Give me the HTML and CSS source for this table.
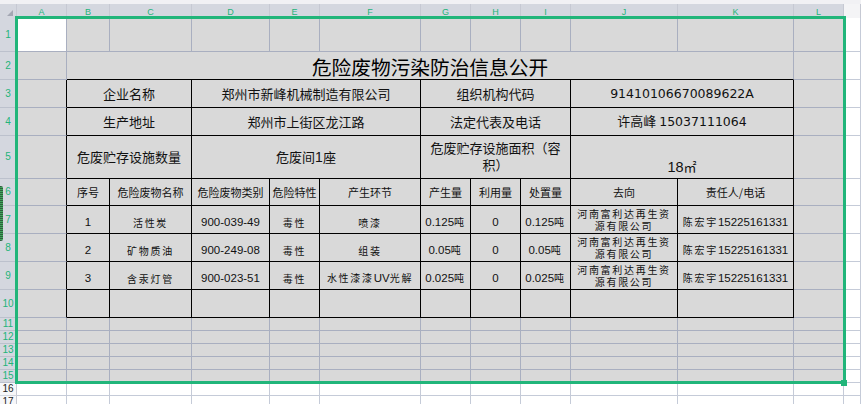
FILE: index.html
```html
<!DOCTYPE html>
<html lang="zh">
<head>
<meta charset="utf-8">
<title>危险废物污染防治信息公开</title>
<link rel="stylesheet" href="styles.css">
</head>
<body>
<div class="sheet">
  <div class="g">
    <div class="strip"></div>

    <div class="h corner"><span class="tri"></span></div>
    <div class="h">A</div><div class="h">B</div><div class="h">C</div><div class="h">D</div><div class="h">E</div><div class="h">F</div><div class="h">G</div><div class="h">H</div><div class="h">I</div><div class="h">J</div><div class="h">K</div><div class="h">L</div><div class="h ho"></div>

    <div class="rh">1</div>
    <div class="w"></div><div></div><div></div><div></div><div></div><div></div><div></div><div></div><div></div><div></div><div></div><div></div><div class="o"></div>

    <div class="rh">2</div>
    <div></div>
    <div class="title kb s10">危险废物污染防治信息公开</div>
    <div></div><div class="o"></div>

    <div class="rh">3</div>
    <div class="kr"></div>
    <div class="t s2 m">企业名称</div>
    <div class="t s3 m">郑州市新峰机械制造有限公司</div>
    <div class="t s3 m">组织机构代码</div>
    <div class="t s2 m"><span class="n">91410106670089622A</span></div>
    <div></div><div class="o"></div>

    <div class="rh">4</div>
    <div class="kr"></div>
    <div class="t s2 m">生产地址</div>
    <div class="t s3 m">郑州市上街区龙江路</div>
    <div class="t s3 m">法定代表及电话</div>
    <div class="t s2 m"><span>许高峰 <span class="n">15037111064</span></span></div>
    <div></div><div class="o"></div>

    <div class="rh">5</div>
    <div class="kr"></div>
    <div class="t s2 m">危废贮存设施数量</div>
    <div class="t s3 m"><span>危废间<span class="n1">1</span>座</span></div>
    <div class="t s3 m wrap">危废贮存设施面积（容积）</div>
    <div class="t s2 m bot"><span><span class="n18">18</span>㎡</span></div>
    <div></div><div class="o"></div>

    <div class="rh">6</div>
    <div class="kr"></div>
    <div class="t hd">序号</div>
    <div class="t hd">危险废物名称</div>
    <div class="t hd">危险废物类别</div>
    <div class="t hd">危险特性</div>
    <div class="t hd">产生环节</div>
    <div class="t hd">产生量</div>
    <div class="t hd">利用量</div>
    <div class="t hd">处置量</div>
    <div class="t hd">去向</div>
    <div class="t hd">责任人/电话</div>
    <div></div><div class="o"></div>

    <div class="rh">7</div>
    <div class="kr"></div>
    <div class="t d">1</div>
    <div class="t d"><span class="z">活性炭</span></div>
    <div class="t d">900-039-49</div>
    <div class="t d"><span class="z">毒性</span></div>
    <div class="t d"><span class="z">喷漆</span></div>
    <div class="t d"><span>0.125<span class="z">吨</span></span></div>
    <div class="t d">0</div>
    <div class="t d"><span>0.125<span class="z">吨</span></span></div>
    <div class="t d2"><span class="z">河南富利达再生资源有限公司</span></div>
    <div class="t d"><span><span class="z">陈宏宇</span>15225161331</span></div>
    <div></div><div class="o"></div>

    <div class="rh">8</div>
    <div class="kr"></div>
    <div class="t d">2</div>
    <div class="t d"><span class="z">矿物质油</span></div>
    <div class="t d">900-249-08</div>
    <div class="t d"><span class="z">毒性</span></div>
    <div class="t d"><span class="z">组装</span></div>
    <div class="t d"><span>0.05<span class="z">吨</span></span></div>
    <div class="t d">0</div>
    <div class="t d"><span>0.05<span class="z">吨</span></span></div>
    <div class="t d2"><span class="z">河南富利达再生资源有限公司</span></div>
    <div class="t d"><span><span class="z">陈宏宇</span>15225161331</span></div>
    <div></div><div class="o"></div>

    <div class="rh">9</div>
    <div class="kr"></div>
    <div class="t d">3</div>
    <div class="t d"><span class="z">含汞灯管</span></div>
    <div class="t d">900-023-51</div>
    <div class="t d"><span class="z">毒性</span></div>
    <div class="t d"><span><span class="z">水性漆漆</span>UV<span class="z">光解</span></span></div>
    <div class="t d"><span>0.025<span class="z">吨</span></span></div>
    <div class="t d">0</div>
    <div class="t d"><span>0.025<span class="z">吨</span></span></div>
    <div class="t d2"><span class="z">河南富利达再生资源有限公司</span></div>
    <div class="t d"><span><span class="z">陈宏宇</span>15225161331</span></div>
    <div></div><div class="o"></div>

    <div class="rh">10</div>
    <div class="kr"></div>
    <div class="t"></div><div class="t"></div><div class="t"></div><div class="t"></div><div class="t"></div><div class="t"></div><div class="t"></div><div class="t"></div><div class="t"></div><div class="t"></div>
    <div></div><div class="o"></div>

    <div class="rh">11</div>
    <div></div><div></div><div></div><div></div><div></div><div></div><div></div><div></div><div></div><div></div><div></div><div></div><div class="o"></div>
    <div class="rh">12</div>
    <div></div><div></div><div></div><div></div><div></div><div></div><div></div><div></div><div></div><div></div><div></div><div></div><div class="o"></div>
    <div class="rh">13</div>
    <div></div><div></div><div></div><div></div><div></div><div></div><div></div><div></div><div></div><div></div><div></div><div></div><div class="o"></div>
    <div class="rh">14</div>
    <div></div><div></div><div></div><div></div><div></div><div></div><div></div><div></div><div></div><div></div><div></div><div></div><div class="o"></div>
    <div class="rh">15</div>
    <div></div><div></div><div></div><div></div><div></div><div></div><div></div><div></div><div></div><div></div><div></div><div></div><div class="o"></div>

    <div class="rh rho">16</div>
    <div class="o"></div><div class="o"></div><div class="o"></div><div class="o"></div><div class="o"></div><div class="o"></div><div class="o"></div><div class="o"></div><div class="o"></div><div class="o"></div><div class="o"></div><div class="o"></div><div class="o"></div>
    <div class="rh rho">17</div>
    <div class="o"></div><div class="o"></div><div class="o"></div><div class="o"></div><div class="o"></div><div class="o"></div><div class="o"></div><div class="o"></div><div class="o"></div><div class="o"></div><div class="o"></div><div class="o"></div><div class="o"></div>
  </div>

  <div class="selection"><span class="handle"></span></div>
  <div class="tab"></div>
</div>
</body>
</html>
```

FILE: styles.css
```css
html, body {
  margin: 0;
  padding: 0;
  background: #ffffff;
  overflow: hidden;
}

.sheet {
  position: relative;
  width: 861px;
  height: 404px;
  overflow: hidden;
  font-family: "Liberation Sans", "Noto Sans CJK SC", sans-serif;
  color: #111;
}

.g {
  display: grid;
  grid-template-columns: 17px 50px 43px 82px 78px 50px 101px 50px 50px 50px 107px 116px 50px 1fr;
  grid-template-rows: 4px 14px 34px 28px 28px 28px 43px 27px 28px 28px 28px 28px repeat(7, 13px);
}

.g > div {
  box-sizing: border-box;
  background: #d9d9d9;
  border-right: 1px solid #a9afc0;
  border-bottom: 1px solid #a9afc0;
  display: flex;
  align-items: center;
  justify-content: center;
  text-align: center;
  min-width: 0;
}

.g > .strip {
  grid-column: 1 / -1;
  background: #f1f1f4;
  border: none;
}

.g > .h {
  background: #d4d7df;
  border-right: 1px solid #c6c9d3;
  border-bottom: none;
  color: #23b47a;
  font-size: 9px;
  line-height: 14px;
  padding-top: 1px;
}

.g > .ho {
  background: #f4f4f6;
}

.g > .corner {
  position: relative;
}

.tri {
  position: absolute;
  right: 3px;
  bottom: 2px;
  width: 0;
  height: 0;
  border-left: 6px solid transparent;
  border-bottom: 6px solid #a3a7b3;
}

.g > .rh {
  background: #d4d7df;
  border-right: 1px solid #c6c9d3;
  border-bottom: 1px solid #bcc1cd;
  color: #23b47a;
  font-size: 10px;
  line-height: 12px;
  justify-content: center;
}

.g > .rho {
  background: #f7f7f9;
  color: #222;
  border-bottom-color: #d3d7e0;
}

.g > .o {
  background: #ffffff;
  border-right-color: #c5cbd8;
  border-bottom-color: #c5cbd8;
}

.g > .w {
  background: #ffffff;
}

.g > .kr {
  border-right-color: #000;
}

.g > .kb {
  border-bottom-color: #000;
}

.g > .t {
  border-right-color: #000;
  border-bottom-color: #000;
}

.s2 { grid-column: span 2; }
.s3 { grid-column: span 3; }
.s10 { grid-column: span 10; }

.g > .title {
  font-family: "Noto Sans CJK SC", sans-serif;
  font-size: 19.7px;
  line-height: 24px;
  color: #000;
  align-items: flex-end;
}

.m {
  font-family: "Noto Sans CJK SC", sans-serif;
  font-size: 13px;
  line-height: 16px;
}

.n {
  font-family: "DejaVu Sans", sans-serif;
  font-size: 12.5px;
}

.n1 {
  font-family: "Liberation Sans", sans-serif;
  font-size: 14px;
}

.n18 {
  font-family: "Liberation Sans", sans-serif;
  font-size: 14.5px;
}

.g > .wrap {
  padding: 0 4px;
  line-height: 16.7px;
}

.g > .bot {
  align-items: flex-end;
  padding-bottom: 3px;
}

.hd {
  font-family: "Noto Sans CJK SC", sans-serif;
  font-size: 11px;
  line-height: 14px;
}

.g > .d {
  font-family: "Liberation Sans", sans-serif;
  font-size: 11.5px;
  line-height: 13px;
  align-items: flex-end;
  padding-bottom: 4px;
  white-space: nowrap;
}

.g > .d2 {
  padding: 0 5px;
  line-height: 11.7px;
}

.z {
  font-family: "Noto Sans CJK SC", sans-serif;
  font-size: 10px;
  letter-spacing: 1.7px;
}

.selection {
  position: absolute;
  left: 15px;
  top: 16px;
  width: 831px;
  height: 368px;
  box-sizing: border-box;
  border: 3px solid #21b57a;
  pointer-events: none;
}

.handle {
  position: absolute;
  right: -4px;
  bottom: -5px;
  width: 6px;
  height: 6px;
  background: #21b57a;
}

.tab {
  position: absolute;
  left: 0;
  top: 186px;
  width: 3px;
  height: 55px;
  border-radius: 0 2px 2px 0;
  background: repeating-linear-gradient(180deg, #2f5f3d 0, #2f5f3d 1px, #3fa85c 1px, #3fa85c 2px);
}
```
